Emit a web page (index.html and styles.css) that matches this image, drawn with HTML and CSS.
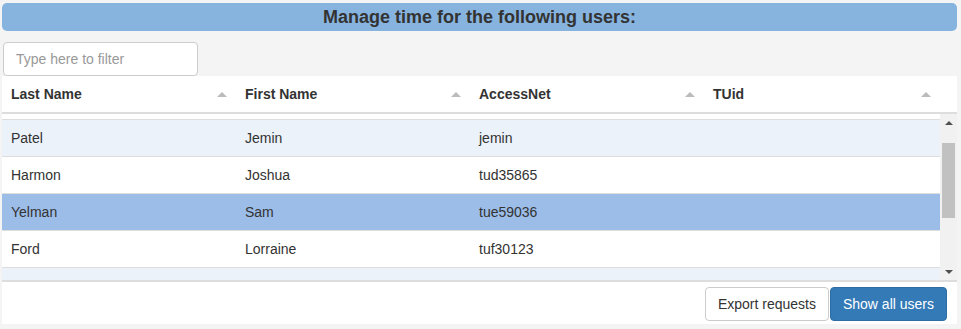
FILE: index.html
```html
<!DOCTYPE html>
<html>
<head>
<meta charset="utf-8">
<link rel="stylesheet" href="styles.css">
</head>
<body>
<div class="page">
  <div class="title">Manage time for the following users:</div>
  <div class="filter-row">
    <input class="filter" type="text" placeholder="Type here to filter">
  </div>
  <div class="grid">
    <div class="head">
      <div class="hcell">Last Name<span class="sort"></span></div>
      <div class="hcell">First Name<span class="sort"></span></div>
      <div class="hcell">AccessNet<span class="sort"></span></div>
      <div class="hcell">TUid<span class="sort"></span></div>
    </div>
    <div class="body">
      <div class="rows">
        <div class="row alt"><div class="cell">Patel</div><div class="cell">Jemin</div><div class="cell">jemin</div><div class="cell"></div></div>
        <div class="row"><div class="cell">Harmon</div><div class="cell">Joshua</div><div class="cell">tud35865</div><div class="cell"></div></div>
        <div class="row sel"><div class="cell">Yelman</div><div class="cell">Sam</div><div class="cell">tue59036</div><div class="cell"></div></div>
        <div class="row"><div class="cell">Ford</div><div class="cell">Lorraine</div><div class="cell">tuf30123</div><div class="cell"></div></div>
        <div class="row alt partial"></div>
      </div>
      <div class="scrollbar">
        <div class="arrow up"></div>
        <div class="track"><div class="thumb"></div></div>
        <div class="arrow down"></div>
      </div>
    </div>
    <div class="footer">
      <button class="btn btn-default">Export requests</button>
      <button class="btn btn-primary">Show all users</button>
    </div>
  </div>
</div>
</body>
</html>
```
FILE: styles.css
```css
html, body {
  margin: 0;
  padding: 0;
  background: #f4f4f4;
}
body {
  font-family: "Liberation Sans", Arial, sans-serif;
  font-size: 14px;
  color: #333;
}
.page {
  width: 955px;
  margin: 3px 0 0 2px;
}
.title {
  height: 28px;
  line-height: 28px;
  background: #87b4df;
  border-radius: 5px;
  text-align: center;
  font-weight: bold;
  font-size: 18px;
  color: #333;
}
.filter-row {
  padding: 11px 0 0 1px;
  height: 34px;
}
.filter {
  box-sizing: border-box;
  width: 195px;
  height: 34px;
  border: 1px solid #ccc;
  border-radius: 4px;
  padding: 6px 12px;
  font-family: "Liberation Sans", Arial, sans-serif;
  font-size: 14px;
  color: #555;
  background: #fff;
  outline: none;
}
.filter::placeholder {
  color: #999;
}
.grid {
  background: #fff;
}
.head {
  display: grid;
  grid-template-columns: 234px 234px 234px 236px;
  height: 36px;
  border-bottom: 2px solid #ddd;
  width: 955px;
}
.hcell {
  display: flex;
  align-items: center;
  justify-content: space-between;
  padding: 0 9px 0 9px;
  font-weight: bold;
}
.sort {
  width: 0;
  height: 0;
  border-left: 5px solid transparent;
  border-right: 5px solid transparent;
  border-bottom: 5px solid #bbb;
}
.body {
  display: flex;
  height: 166px;
}
.rows {
  width: 938px;
  padding-top: 5px;
  overflow: hidden;
}
.row {
  display: grid;
  grid-template-columns: 234px 234px 234px 236px;
  height: 36px;
  border-top: 1px solid #ddd;
}
.row.alt { background: #ebf2fa; }
.row.sel { background: #9bbde8; }
.row.partial { height: 12px; }
.cell {
  display: flex;
  align-items: center;
  padding-left: 9px;
}
.scrollbar {
  width: 17px;
  background: #f1f1f1;
  display: flex;
  flex-direction: column;
}
.arrow {
  height: 17px;
  display: flex;
  align-items: center;
  justify-content: center;
}
.arrow.up::before {
  content: "";
  border-left: 4px solid transparent;
  border-right: 4px solid transparent;
  border-bottom: 4px solid #505050;
}
.arrow.down::before {
  content: "";
  border-left: 4px solid transparent;
  border-right: 4px solid transparent;
  border-top: 4px solid #505050;
}
.track {
  flex: 1;
  padding: 12px 2px 0 2px;
}
.thumb {
  height: 75px;
  background: #c1c1c1;
}
.footer {
  border-top: 2px solid #ddd;
  height: 44px;
  display: flex;
  justify-content: flex-end;
  align-items: flex-start;
  gap: 1px;
  padding: 5px 10px 0 0;
  box-sizing: border-box;
}
.btn {
  height: 34px;
  padding: 6px 12px;
  font-family: "Liberation Sans", Arial, sans-serif;
  font-size: 14px;
  line-height: 20px;
  border-radius: 4px;
  border: 1px solid #ccc;
  cursor: pointer;
}
.btn-default {
  background: #fff;
  color: #333;
}
.btn-primary {
  background: #337ab7;
  border-color: #2e6da4;
  color: #fff;
}
```
